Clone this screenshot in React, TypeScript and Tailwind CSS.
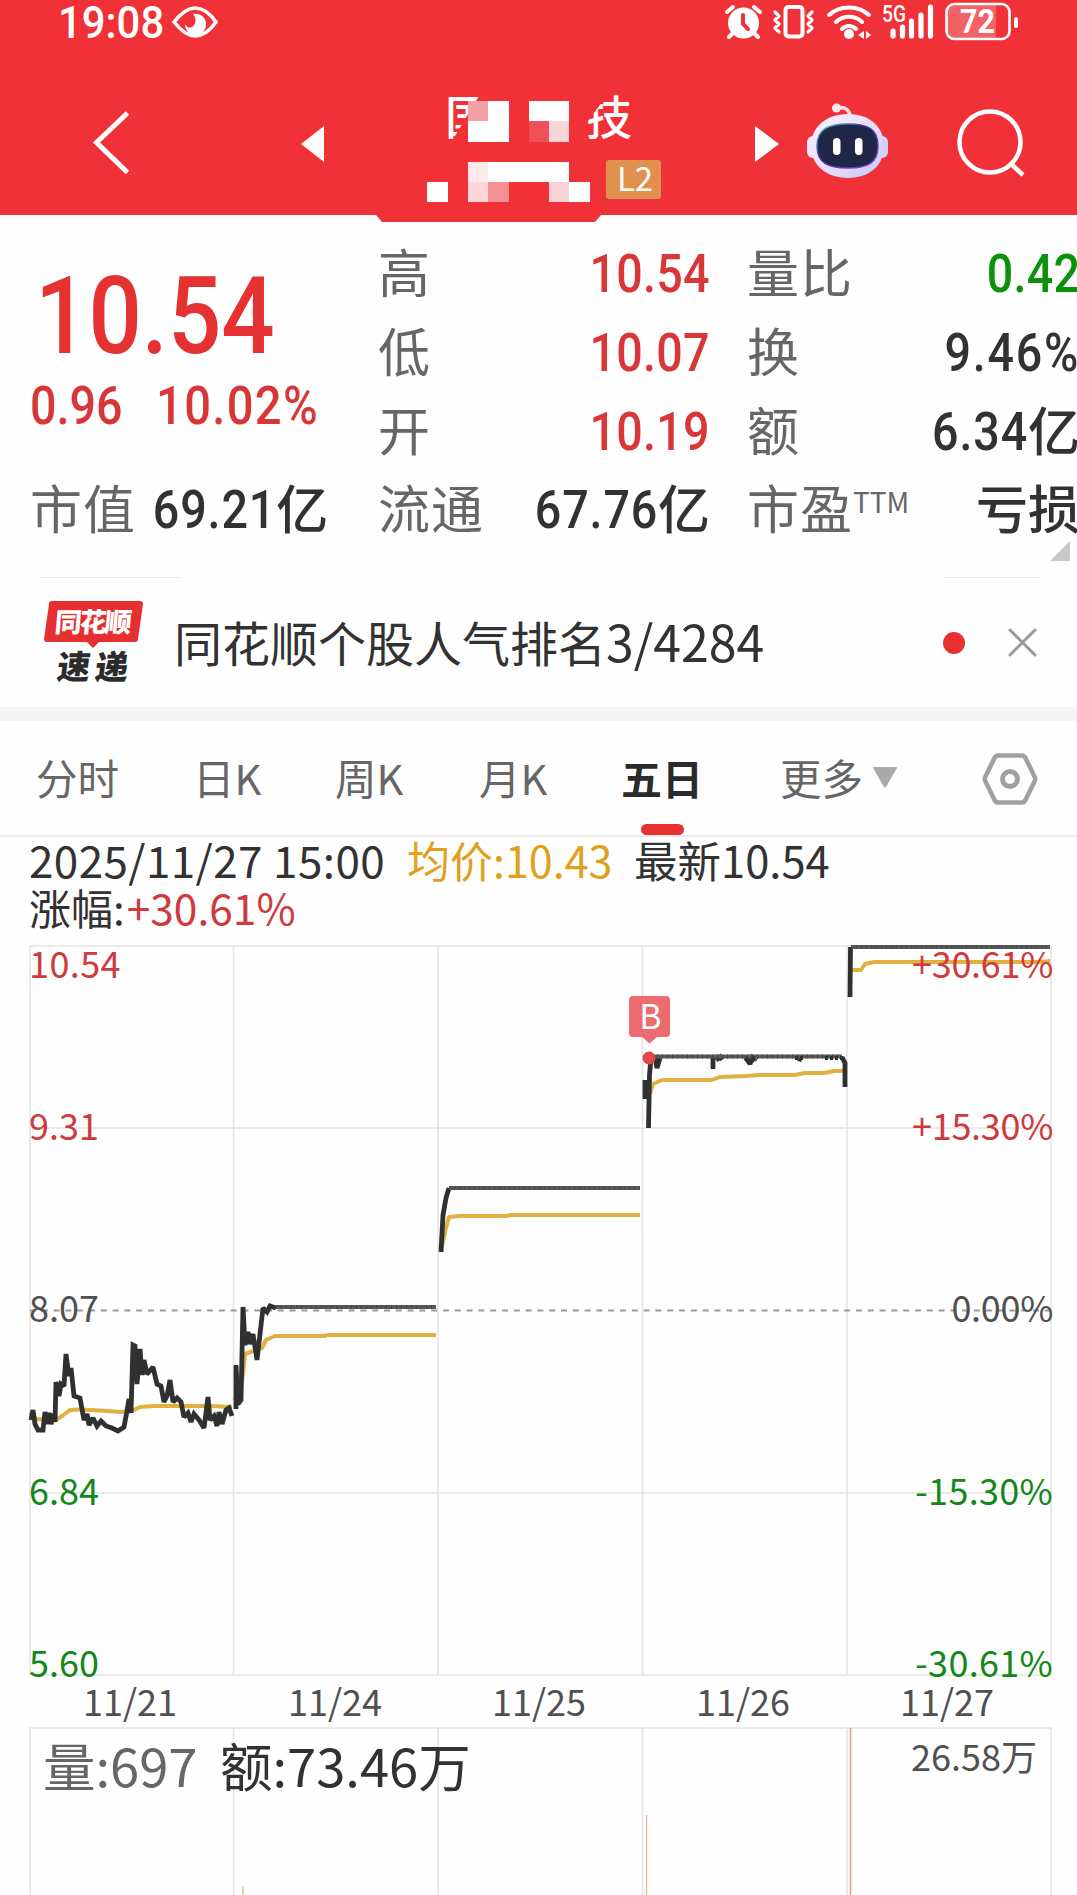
import React from "react";

const CJK = "font-['Noto_Sans_CJK_SC',sans-serif]";
const NUM =
  "inline-block shrink-0 whitespace-nowrap font-['Roboto','Noto_Sans_CJK_SC',sans-serif] text-[53px] font-medium";

function StatusBar() {
  return (
    <div className="flex h-[44px] items-start text-white">
      <div className="w-[112px] pl-[58px]">
        <span className="inline-block origin-left scale-x-[0.93] whitespace-nowrap font-['Roboto',sans-serif] text-[45px] leading-[45px] font-medium">
          19:08
        </span>
      </div>
      <svg className="mt-[4px] ml-[58px] h-[36px] w-[50px]" viewBox="170 4 50 36" fill="none">
        <path d="M174 22C182 12 188 8 195 8s14 4 21 14c-7 10-14 14-21 14s-13-4-21-14Z" stroke="#fff" strokeWidth="3.6" />
        <path d="M193 14c8-1 13 4 13 10 0 7-5 11-11 11s-10-5-10-11c1 3 4 4 7 3 4-2 5-8 1-13Z" fill="#fff" />
      </svg>
      <svg className="ml-auto h-[44px] w-[357px] shrink-0" viewBox="720 0 357 44" fill="none" stroke="#fff" strokeLinecap="round">
        <circle cx="743.500" cy="23" r="15.500" fill="#fff" stroke="none" />
        <path d="M733 33l-4 4M754 33l4 4M727 12l6-5M754 7l6 5" strokeWidth="4" />
        <path d="M743 15v9l5 5" stroke="#f03137" strokeWidth="4" />
        <rect x="785.500" y="7" width="17" height="29.500" rx="3" strokeWidth="4" />
        <path d="M775 12l4 4-4 4 4 4-4 4 4 4M812 12l-4 4 4 4-4 4 4 4-4 4" strokeWidth="3.200" strokeLinejoin="round" />
        <path d="M829 15c11-10 29-10 40 0M836 22c7-7 19-7 26 0M842 29c4-4 10-4 14 0" strokeWidth="4" />
        <circle cx="849" cy="34" r="5" fill="#fff" stroke="none" />
        <path d="M858 35l6-4v8zM871 35l-5-4v8z" fill="#fff" stroke="none" />
        <path d="M893 31v5M902.500 27v9M911.500 21v15M921 15v21M930.500 7v29" strokeWidth="5.200" />
        <text x="882" y="21.500" fill="#fff" stroke="none" fontFamily="Roboto" fontWeight="500" fontSize="23" textLength="24" lengthAdjust="spacingAndGlyphs">5G</text>
        <path d="M953 4h43v35h-43q-7 0-7-7V11q0-7 7-7Z" fill="#fff" fillOpacity=".24" stroke="none" />
        <rect x="946.500" y="4" width="63" height="35" rx="8" strokeWidth="2.600" />
        <path d="M1016 19v7" strokeWidth="4" />
        <text x="960" y="32.500" fill="#fff" stroke="none" fontFamily="Roboto" fontWeight="700" fontSize="33" textLength="35" lengthAdjust="spacingAndGlyphs">72</text>
      </svg>
    </div>
  );
}

function Robot() {
  return (
    <svg className="ml-[26px] h-[78px] w-[84px]" viewBox="805 102 84 78" fill="none">
      <defs>
        <linearGradient id="shell" x1="0" y1="0" x2="1" y2="1">
          <stop offset="0" stopColor="#fbf3ff" />
          <stop offset=".55" stopColor="#e8dcf8" />
          <stop offset="1" stopColor="#bfc8ff" />
        </linearGradient>
        <linearGradient id="visor" x1="0" y1="0" x2="1" y2="1">
          <stop offset="0" stopColor="#5cc6cf" />
          <stop offset=".4" stopColor="#3b3aa0" />
          <stop offset="1" stopColor="#8a3fd8" />
        </linearGradient>
      </defs>
      <path d="M837 108c9-2 13 3 13 9" stroke="#ffe3ea" strokeWidth="3.500" />
      <circle cx="836.500" cy="108" r="4.500" fill="#fbe6ee" />
      <rect x="807" y="136" width="12" height="22" rx="6" fill="#f3eaff" />
      <rect x="876" y="136" width="12" height="22" rx="6" fill="#cfd2ff" />
      <path d="M848 114c23 0 36 14 36 32s-13 32-36 32-37-14-37-32 14-32 37-32Z" fill="url(#shell)" />
      <path d="M848 124c20 0 30 5 30 22s-10 22-30 22-31-5-31-22 11-22 31-22Z" fill="#1f2747" stroke="url(#visor)" strokeWidth="1.400" />
      <rect x="833" y="138" width="7.500" height="17" rx="3.700" fill="#fff" />
      <rect x="855" y="138" width="7.500" height="17" rx="3.700" fill="#fff" />
    </svg>
  );
}

function Title() {
  return (
    <div className="relative ml-[52px] h-[132px] w-[290px]">
      <span className={`absolute top-[-6px] left-[69px] text-[46px] leading-[60px] font-medium text-white [clip-path:polygon(0_0,90%_0,12%_100%,0_100%)] ${CJK}`}>
        国
      </span>
      <span className={`absolute top-[-6px] left-[210px] text-[46px] leading-[60px] font-medium text-white [clip-path:polygon(65%_0,100%_0,100%_100%,0_100%,0_67%)] ${CJK}`}>
        技
      </span>
      <svg className="absolute top-0 left-0 h-[132px] w-[290px]" viewBox="376 90 290 132" shapeRendering="crispEdges">
        <path d="M468 101h41v41h-41zM529 101h40v20h-40zM427 182h21v20h-21zM488 162h81v20h-81zM569 182h21v20h-21z" fill="#fff" />
        <path d="M468 101h20v20h-20z" fill="#f7a0a3" />
        <path d="M529 121h20v21h-20z" fill="#f25059" />
        <path d="M549 121h20v21h-20z" fill="#fad5d7" />
        <path d="M468 162h20v20h-20z" fill="#ffe9ea" />
        <path d="M468 182h20v20h-20z" fill="#ffd9da" />
        <path d="M488 182h21v20h-21z" fill="#f68f92" />
        <path d="M549 182h20v20h-20z" fill="#fbd2d5" />
      </svg>
      <span className={`absolute top-[70px] left-[230px] flex h-[39px] w-[55px] items-center justify-center rounded-[3px] bg-[#e2904d] pb-[3px] pl-[3px] text-[33px] leading-none text-white ${CJK}`}>
        L2
      </span>
    </div>
  );
}

function Header() {
  return (
    <header className="relative h-[215px] bg-[#f03137]">
      <StatusBar />
      <div className="flex h-[171px] items-center pb-[4px]">
        <svg className="ml-[92px] h-[68px] w-[40px] translate-y-[15px]" viewBox="92 108 40 68" fill="none">
          <path d="M127.500 112L96.500 141.500l31 30" stroke="#fff" strokeWidth="5" />
        </svg>
        <svg className="ml-[168px] h-[38px] w-[24px] translate-y-[16px]" viewBox="300 125 24 38">
          <path d="M324 126v36l-23-18z" fill="#fff" />
        </svg>
        <div className="translate-y-[28px]"><Title /></div>
        <svg className="ml-[88px] h-[38px] w-[25px] translate-y-[16px]" viewBox="754 125 25 38">
          <path d="M755 126v36l24-18z" fill="#fff" />
        </svg>
        <div className="translate-y-[13px]"><Robot /></div>
        <svg className="ml-[67px] h-[70px] w-[72px] shrink-0 translate-y-[16px]" viewBox="956 109 72 70" fill="none" stroke="#fff" strokeWidth="4.500">
          <circle cx="990" cy="142" r="30.500" />
          <path d="M1010 163l13 12" />
        </svg>
      </div>
      <svg className="absolute top-[214px] left-[376px] h-[8px] w-[225px]" viewBox="0 0 225 8">
        <path d="M0 0h225v1l-6 7H6L0 1z" fill="#f03137" />
      </svg>
    </header>
  );
}

function Label({ children }: { children: React.ReactNode }) {
  return <span className={`relative -top-[3px] text-[52px] tracking-[1px] text-[#666] ${CJK}`}>{children}</span>;
}

type Cell = { label: React.ReactNode; value: string; unit?: string; color: string; spacing?: string };

function Row({ label, value, unit, color, spacing = "tracking-[0.3px]" }: Cell) {
  return (
    <div className={`flex h-[78.700px] items-center justify-between whitespace-nowrap leading-[78px] ${color}`}>
      <Label>{label}</Label>
      <span className="flex">
        {value && <span className={`origin-right scale-x-[0.88] ${spacing} ${NUM}`}>{value}</span>}
        {unit && <span className={`relative -top-[3px] text-[52px] font-medium ${CJK}`}>{unit}</span>}
      </span>
    </div>
  );
}

function Quote() {
  const red = "text-[#d93638]";
  const ink = "text-[#323232]";
  return (
    <section className="relative flex h-[362px] overflow-hidden pt-[20px]">
      <div className="ml-[30px] w-[296px] shrink-0">
        <div className="h-[131px] text-[#e53131]">
          <span className="ml-[5px] inline-block origin-left scale-x-[0.87] font-['Roboto',sans-serif] text-[108px] leading-[162px] font-medium">
            10.54
          </span>
        </div>
        <div className={`flex h-[105px] ${red}`}>
          <span className={`w-[126px] origin-left scale-x-[0.88] leading-[80px] ${NUM}`}>0.96</span>
          <span className={`origin-left scale-x-[0.89] leading-[80px] tracking-[1.500px] ${NUM}`}>10.02%</span>
        </div>
        <Row label="市值" value="69.21" unit="亿" color={ink} spacing="tracking-[1px]" />
      </div>
      <div className="ml-[52px] w-[332px] shrink-0">
        <Row label="高" value="10.54" color={red} />
        <Row label="低" value="10.07" color={red} />
        <Row label="开" value="10.19" color={red} />
        <Row label="流通" value="67.76" unit="亿" color={ink} spacing="tracking-[1px]" />
      </div>
      <div className="ml-[37px] w-[333px] shrink-0">
        <Row label="量比" value="0.42" color="text-[#0a930a]" />
        <Row label="换" value="9.46%" color={ink} spacing="tracking-[2px]" />
        <Row label="额" value="6.34" unit="亿" color={ink} spacing="tracking-[1px]" />
        <Row
          label={<>市盈<span className="inline-block -translate-y-[16px] align-baseline text-[28px] leading-none tracking-[0px]">TTM</span></>}
          value=""
          unit="亏损"
          color={ink}
        />
      </div>
      <svg className="absolute top-[326px] left-[1050px] h-[20px] w-[20px]" viewBox="0 0 20 20">
        <path d="M20 0v20H0z" fill="#c8c8c8" />
      </svg>
    </section>
  );
}

function Notice() {
  return (
    <section className="h-[130px]">
      <div className="flex h-px justify-between pr-[37px] pl-[40px]">
        <i className="w-[140px] bg-[#e8e8e8]" />
        <i className="w-[97px] bg-[#e8e8e8]" />
      </div>
      <div className="flex h-[129px] items-center whitespace-nowrap">
        <svg className="ml-[42px] h-[84px] w-[104px] shrink-0" viewBox="42 601 104 84">
          <path d="M52 601h88q3 0 3 3l-5 35q0 3-3 3H99l-6 6-6-6H47q-3 0-3-3l5-35q0-3 3-3Z" fill="#e52f31" />
          <g fontFamily="Noto Sans CJK SC" fontWeight="900">
            <text transform="translate(54 632) skewX(-5)" fontSize="27" fill="#fff" textLength="77">同花顺</text>
            <text transform="translate(56 678.500) skewX(-7)" fontSize="33" fill="#2b2b2b" textLength="71">速递</text>
          </g>
        </svg>
        <span className={`-mt-[5px] ml-[28px] text-[48px] leading-[70px] text-[#323232] ${CJK}`}>
          同花顺个股人气排名<span className="text-[50px]">3/4284</span>
        </span>
        <i className="mr-[43px] ml-auto h-[22px] w-[22px] rounded-full bg-[#e53131]" />
        <svg className="mr-[40px] h-[29px] w-[29px]" viewBox="0 0 29 29" stroke="#999" strokeWidth="3" strokeLinecap="round">
          <path d="M2 2l25 25M27 2L2 27" />
        </svg>
      </div>
    </section>
  );
}

function Tabs() {
  return (
    <nav className={`flex h-[116px] items-center border-b-2 border-[#ebebeb] text-[41.500px] leading-[60px] whitespace-nowrap text-[#666] ${CJK}`}>
      <span className="-mt-[2px] ml-[36px] w-[157px]">分时</span>
      <span className="-mt-[2px] w-[142px]">日K</span>
      <span className="-mt-[2px] w-[144px]">周K</span>
      <span className="-mt-[2px] w-[142px]">月K</span>
      <span className="relative -mt-[2px] w-[159px] text-[41px] font-bold text-[#2b2b2b]">
        五日
        <i className="absolute top-[77px] left-[20px] h-[11px] w-[43px] rounded-full bg-[#e53131]" />
      </span>
      <span className="-mt-[2px]">更多</span>
      <svg className="-mt-[2px] ml-[10px] h-[21px] w-[24px]" viewBox="0 0 24 21">
        <path d="M1 0h22q1 0 1 1L13 20q-1 1-2 0L0 1q0-1 1-1Z" fill="#aaa" />
      </svg>
      <svg className="mt-[2px] mr-[39px] ml-auto h-[54px] w-[56px]" viewBox="982 752 56 54" fill="none" stroke="#a0a0a0" strokeWidth="4.500" strokeLinejoin="round">
        <path d="M998 755.500h24q2 0 3.500 2.500l9 18.500q1.500 2.500 0 5l-9 18.500q-1.500 2.500-3.500 2.500h-24q-2 0-3.500-2.500l-9-18.500q-1.500-2.500 0-5l9-18.500q1.500-2.500 3.500-2.500Z" />
        <circle cx="1010" cy="779" r="7.500" strokeWidth="5" />
      </svg>
    </nav>
  );
}

function Summary() {
  return (
    <section className={`h-[93px] pl-[29px] leading-[45px] whitespace-nowrap text-[#323232] ${CJK}`}>
      <div className="flex h-[45px] items-center text-[44px]">
        <span className="w-[378px] tracking-[0.400px]">2025/11/27 15:00</span>
        <span className="w-[227px] text-[43px] text-[#e0a01e]">均价:10.43</span>
        <span className="text-[43.500px]">最新10.54</span>
      </div>
      <div className="flex h-[48px] items-center">
        <span className="text-[42px]">涨幅:</span>
        <span className="ml-[2px] text-[42.500px] text-[#cf3a3c]">+30.61%</span>
      </div>
    </section>
  );
}

const GRID_X = [233.5, 438, 642.5, 847];
const LEVELS = [
  { y: 965, price: "10.54", pct: "+30.61%", fill: "#cf3a3c" },
  { y: 1127, price: "9.31", pct: "+15.30%", fill: "#cf3a3c" },
  { y: 1309, price: "8.07", pct: "0.00%", fill: "#505050" },
  { y: 1492, price: "6.84", pct: "-15.30%", fill: "#14871a" },
  { y: 1664, price: "5.60", pct: "-30.61%", fill: "#14871a" },
];
const DATES = [
  { x: 130, d: "11/21" },
  { x: 335, d: "11/24" },
  { x: 539, d: "11/25" },
  { x: 743, d: "11/26" },
  { x: 947, d: "11/27" },
];

function Chart() {
  return (
    <svg className="block h-[965px] w-full" viewBox="0 930 1077 965" fill="none" fontFamily="'Noto Sans CJK SC', sans-serif">
      <g stroke="#e4e4e4" strokeWidth="1.500">
        <path d="M30 946H1051V1675H30ZM30 1128H1051M30 1493H1051M30 1895V1728H1051V1895" />
        {GRID_X.map((x) => (
          <path key={x} d={`M${x} 946V1675M${x} 1728V1895`} />
        ))}
      </g>
      <path d="M30 1310.500H1051" stroke="#999" strokeWidth="1.800" strokeDasharray="6 5.800" />
      <path d="M243 1886V1895M646.500 1815V1895" stroke="#e5bfae" strokeWidth="1.500" />
      <path d="M850.500 1728V1895" stroke="#dc9d94" strokeWidth="1.500" />

      <g stroke="#e2b040" strokeWidth="4" strokeLinejoin="round">
        <path d="M30 1412L36 1419L56 1420L62 1416L70 1410L80 1409.500L100 1410.500L120 1412L132 1411L140 1407L155 1406L210 1406L232 1407" />
        <path d="M234 1400L240 1392L243 1375L245 1354L262 1348L266 1340L275 1336L325 1336L327 1335H436" />
        <path d="M441 1250L446 1228L449 1217L460 1216L506 1216L510 1215H640" />
        <path d="M650 1094L653 1084L662 1080L712 1080L720 1077L746 1076L760 1075L795 1075L805 1073L824 1073L834 1071L843 1071" />
        <path d="M851 970H861L865 964L874 962H1041L1050 961" />
      </g>
      <g stroke="#2f3130" strokeWidth="4.800" strokeLinejoin="miter" strokeMiterlimit="2">
        <path d="M31 1420L33 1410L35 1424L38 1430H43L45 1412L47 1424L49 1413L51 1424L54 1414L55 1422L56 1382L59 1396L61 1384L64 1386L66 1354L69 1376L71 1368L74 1396L80 1398L84 1420L87 1414L89 1425L93 1418L97 1426L101 1421L106 1426L112 1428L118 1431L124 1427L127 1411L129 1399L131 1413L133 1345L135 1346L137 1384L140 1349L142 1375L144 1360L147 1374L149 1372L153 1367L157 1384L161 1386L164 1402L167 1396L170 1380L173 1402L177 1398L181 1402L184 1417L188 1413L191 1422L194 1414L199 1420L204 1428L208 1397L210 1420L214 1416L217 1426L219 1412L222 1424L226 1410L229 1408L232 1416" />
        <path d="M236 1409V1365L238 1404L241 1400L243 1307L245 1345L248 1332L250 1344L253 1334L257 1360L260 1334L263 1308L267 1312L270 1306L276 1308" />
        <path d="M441 1252L443 1215L446 1198L449 1188" />
        <path d="M645 1080V1099M648.500 1128L649.500 1075L651 1058L655 1058L657 1068L660 1058M713 1056V1069M716 1060L720 1057L722 1060M746 1058L750 1064L752 1058L755 1061M798 1058L802 1060M842 1057L845 1063V1087" />
        <path d="M850 997L850.500 947" />
      </g>
      <g stroke="#555857" strokeWidth="4.200">
        <path d="M276 1307H436M449 1188H640M652 1056.500H842M851 947H1050" />
        <path d="M276 1307H436M449 1188H640M652 1056.500H842M851 947H1050" stroke="#454746" strokeDasharray="1 4" />
      </g>
      <path d="M745 1058l4 4 4-4 4 2M795 1058h10M825 1058h18" stroke="#2f3130" strokeWidth="4" strokeDasharray="3 2" />

      <circle cx="649" cy="1058" r="6.500" fill="#e4474b" />
      <path d="M633 996h33q4 0 4 4v33q0 4-4 4h-9l-7.500 6.500L642 1037h-9q-4 0-4-4v-33q0-4 4-4Z" fill="#ed6c6f" />
      <text x="650.500" y="1028.500" textAnchor="middle" fontSize="34" fill="#fff">B</text>

      <g fontSize="36">
        {LEVELS.map(({ y, price, pct, fill }) => (
          <g key={y} fill={fill}>
            <text x="29" y={y + 13.2} letterSpacing={price === "10.54" ? 0.4 : 0}>{price}</text>
            <text x="1053" y={y + 13.2} textAnchor="end" letterSpacing={pct.startsWith("-") ? 0.3 : -0.3}>{pct}</text>
          </g>
        ))}
        {DATES.map(({ x, d }) => (
          <text key={d} x={x} y="1716" textAnchor="middle" fill="#505050">{d}</text>
        ))}
        <text x="1037" y="1771" textAnchor="end" fill="#505050">26.58万</text>
      </g>
      <text x="43" y="1787" fontSize="52.500" fill="#666">量:697</text>
      <text x="220" y="1787" fontSize="52.500" fill="#323232">额:73.46万</text>
    </svg>
  );
}

export default function App() {
  return (
    <main className="h-[1895px] w-[1077px] overflow-hidden bg-[#fefefe]">
      <Header />
      <Quote />
      <Notice />
      <div className="h-[14px] bg-[#f4f4f4]" />
      <Tabs />
      <Summary />
      <Chart />
    </main>
  );
}
